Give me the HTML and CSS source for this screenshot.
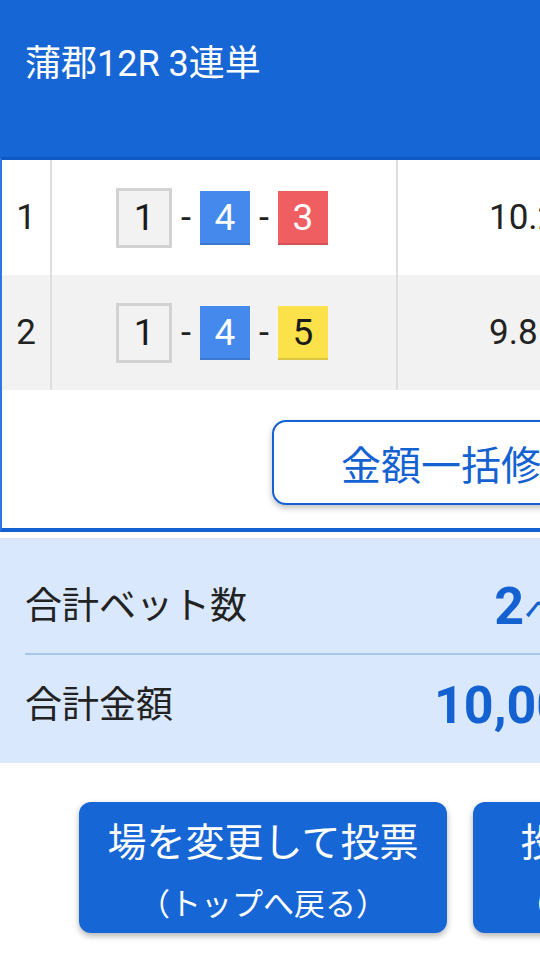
FILE: index.html
```html
<!DOCTYPE html>
<html lang="ja">
  <head>
    <meta charset="UTF-8" />
    <meta name="viewport" content="width=device-width, initial-scale=1.0" />
    <title>投票内容の確認</title>
    <link rel="stylesheet" href="styles.css">
  </head>
  <body>
    <div class="page">
      <header class="head">
        <h1 class="title">蒲郡12R 3連単</h1>
      </header>

      <section class="panel">
        <table class="bets">
          <tr>
            <td class="no">1</td>
            <td class="combo">
              <div class="boats">
                <span class="boat b1">1</span><span class="dash">-</span><span class="boat b4">4</span><span class="dash">-</span><span class="boat b3">3</span>
              </div>
            </td>
            <td class="odds">10.2</td>
          </tr>
          <tr class="alt">
            <td class="no">2</td>
            <td class="combo">
              <div class="boats">
                <span class="boat b1">1</span><span class="dash">-</span><span class="boat b4">4</span><span class="dash">-</span><span class="boat b5">5</span>
              </div>
            </td>
            <td class="odds">9.8</td>
          </tr>
        </table>
        <div class="tools">
          <button class="bulk" type="button">金額一括修正</button>
        </div>
      </section>

      <section class="summary">
        <div class="sum-row first">
          <span class="sum-label">合計ベット数</span>
          <span class="sum-value">2<small>ベット</small></span>
        </div>
        <div class="sum-row last">
          <span class="sum-label">合計金額</span>
          <span class="sum-value">10,000<small>円</small></span>
        </div>
      </section>

      <div class="actions">
        <button class="act" type="button">
          <span class="act-main">場を変更して投票</span>
          <span class="act-sub">（トップへ戻る）</span>
        </button>
        <button class="act" type="button">
          <span class="act-main">投票を確定する</span>
          <span class="act-sub">（投票内容を送信）</span>
        </button>
      </div>
    </div>
  </body>
</html>
```

FILE: styles.css
```css
html,
body {
  margin: 0;
  overflow: hidden;
}
body {
  font-family: Roboto, "Noto Sans CJK JP", sans-serif;
  background-color: #fff;
  color: #222;
}
.page {
  width: 920px;
}
.head {
  background-color: #1766d6;
  height: 157px;
  box-sizing: border-box;
  padding: 38px 25px 0;
}
.title {
  margin: 0;
  font-size: 36px;
  font-weight: normal;
  line-height: 52px;
  color: #fff;
}
.panel {
  border-top: 3px solid #0f57c4;
  border-left: 2px solid #2c78df;
  border-bottom: 4px solid #1460d0;
}
.bets {
  width: 100%;
  border-collapse: collapse;
}
.bets td {
  height: 115px;
  padding: 0;
  font-size: 35px;
  vertical-align: middle;
}
.bets tr.alt td {
  background-color: #f2f2f2;
}
.no {
  width: 48px;
  text-align: center;
  border-right: 2px solid #dedede;
}
.combo {
  width: 344px;
  border-right: 2px solid #dedede;
}
.bets td.odds {
  padding-left: 91px;
}
.boats {
  display: flex;
  align-items: center;
  justify-content: center;
  gap: 9px;
  padding-right: 4px;
}
.boat {
  width: 50px;
  height: 54px;
  line-height: 54px;
  text-align: center;
  font-size: 37px;
  color: #fff;
  box-shadow: inset 0 -2px 0 rgba(0, 0, 0, 0.12);
}
.boat.b1 {
  background-color: #f2f2f2;
  color: #1a1a1a;
  border: 3px solid #d2d2d2;
  box-shadow: none;
}
.boat.b4 {
  background-color: #4589ec;
}
.boat.b3 {
  background-color: #ef5f62;
}
.boat.b5 {
  background-color: #fbe24b;
  color: #1a1a1a;
}
.dash {
  font-size: 36px;
  color: #222;
}
.tools {
  display: flex;
  justify-content: center;
  padding: 30px 0 23px;
}
.bulk {
  width: 378px;
  height: 85px;
  font-family: inherit;
  font-size: 40px;
  color: #1462d2;
  background-color: #fff;
  border: 2px solid #1462d2;
  border-radius: 14px;
  box-shadow: 0 3px 6px rgba(0, 0, 0, 0.25);
}
.summary {
  margin-top: 6px;
  border-top: 1px solid #dde3eb;
  background-color: #d9e8fc;
  padding: 0 25px;
}
.sum-row {
  width: 607px;
  box-sizing: border-box;
  display: flex;
  justify-content: space-between;
  align-items: center;
  line-height: 1.3;
}
.sum-row.first {
  height: 116px;
  padding-top: 22px;
  border-bottom: 2px solid #a6c5ec;
}
.sum-row.last {
  height: 108px;
  padding-bottom: 6px;
}
.sum-label {
  font-size: 37px;
  color: #222;
}
.sum-value {
  font-size: 52px;
  font-weight: bold;
  color: #1462d2;
}
.sum-value small {
  font-size: 36px;
  font-weight: normal;
}
.actions {
  display: flex;
  justify-content: center;
  gap: 26px;
  padding: 39px 0 40px;
}
.act {
  width: 368px;
  height: 131px;
  box-sizing: border-box;
  padding: 15px 0 6px;
  display: flex;
  flex-direction: column;
  align-items: center;
  font-family: inherit;
  color: #fff;
  background-color: #1766d6;
  border: none;
  border-radius: 12px;
  box-shadow: 0 3px 6px rgba(0, 0, 0, 0.3);
}
.act-main {
  font-size: 39px;
  line-height: 52px;
}
.act-sub {
  margin-top: 14px;
  font-size: 31px;
  line-height: 44px;
}
```
